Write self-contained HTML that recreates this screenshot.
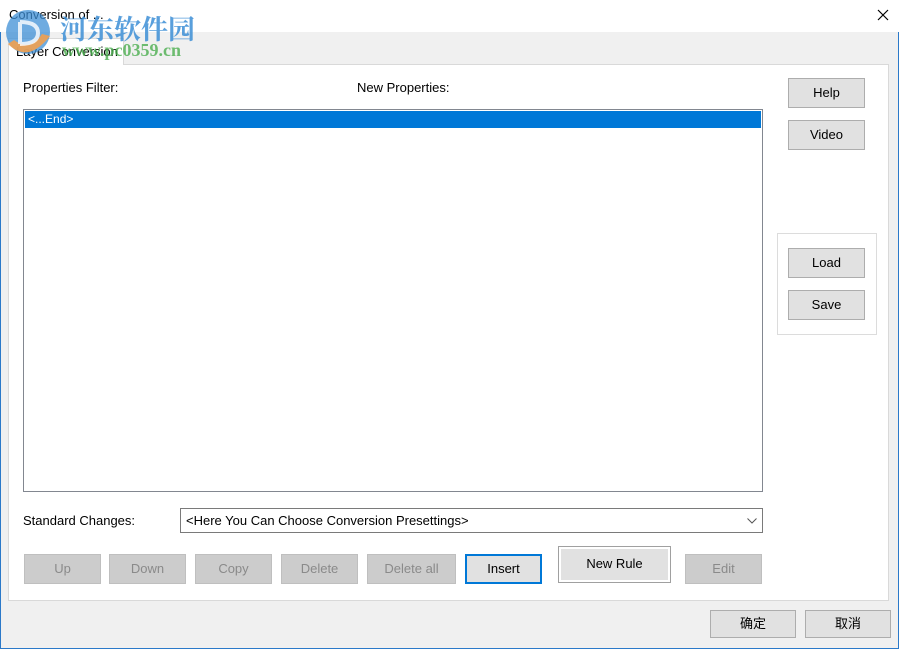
<!DOCTYPE html>
<html><head><meta charset="utf-8"><style>
*{box-sizing:border-box;margin:0;padding:0}
body{width:899px;height:649px;background:#f0f0f0;font-family:"Segoe UI","Liberation Sans","Noto Sans CJK SC",sans-serif;font-size:12px;color:#000;position:relative;overflow:hidden}
.a{position:absolute}
.frame{left:0;top:0;width:899px;height:649px;border:1px solid #2b79c9;border-top:none}
.btn{position:absolute;background:#e1e1e1;border:1px solid #adadad;text-align:center;font-size:13px;}
.dis{background:#cccccc;border-color:#bfbfbf;color:#8a8a8a}
</style></head><body>
<div class="a frame"></div>
<div class="a" style="left:0;top:0;width:899px;height:32px;background:#fff"></div>
<div class="a" style="left:9px;top:7px;font-size:13px">Conversion of ...</div>
<svg class="a" style="left:877px;top:9px" width="12" height="12"><path d="M1 1L11 11M11 1L1 11" stroke="#000" stroke-width="1.2"/></svg>
<!-- panel -->
<div class="a" style="left:8px;top:64px;width:881px;height:537px;background:#fff;border:1px solid #d9d9d9"></div>
<div class="a" style="left:8px;top:38px;width:116px;height:27px;background:#fff;border:1px solid #d9d9d9;border-bottom:none"></div>
<div class="a" style="left:16px;top:44px;font-size:13px">Layer Conversion</div>
<!-- watermark -->
<svg class="a" style="left:2px;top:8px" width="56" height="52"><circle cx="26" cy="24" r="22" fill="#3d8fd6" opacity=".75"/><path d="M6 36 Q26 56 48 28 L40 26 Q28 44 12 32Z" fill="#f0a050" opacity=".9"/><path d="M18 14 L18 36 M18 14 Q36 14 36 25 Q36 36 18 36" stroke="#fff" stroke-width="4" fill="none" opacity=".8"/></svg>
<div class="a" style="left:60px;top:8px;font-size:27px;font-weight:bold;color:#3d8fd6;opacity:.85;font-family:'Noto Serif CJK SC',serif">河东软件园</div>
<div class="a" style="left:62px;top:40px;font-size:18px;font-weight:bold;color:#4caf50;opacity:.8;font-family:'Liberation Serif',serif">www.pc0359.cn</div>
<div class="a" style="left:23px;top:80px;font-size:13px">Properties Filter:</div>
<div class="a" style="left:357px;top:80px;font-size:13px">New Properties:</div>
<div class="a" style="left:23px;top:109px;width:740px;height:383px;border:1px solid #828790;background:#fff"></div>
<div class="a" style="left:25px;top:111px;width:736px;height:17px;background:#0078d7;color:#fff;padding-left:3px;font-size:12px;line-height:17px">&lt;...End&gt;</div>
<div class="a" style="left:23px;top:513px;font-size:13px">Standard Changes:</div>
<div class="a" style="left:180px;top:508px;width:583px;height:25px;border:1px solid #7a7a7a;background:#fff;padding-left:5px;line-height:23px;font-size:13px">&lt;Here You Can Choose Conversion Presettings&gt;<svg style="position:absolute;right:5px;top:9px" width="10" height="6"><path d="M0.5 0.5L5 5L9.5 0.5" stroke="#555" fill="none"/></svg></div>
<div class="btn dis" style="left:24px;top:554px;width:77px;height:30px;line-height:28px">Up</div>
<div class="btn dis" style="left:109px;top:554px;width:77px;height:30px;line-height:28px">Down</div>
<div class="btn dis" style="left:195px;top:554px;width:77px;height:30px;line-height:28px">Copy</div>
<div class="btn dis" style="left:281px;top:554px;width:77px;height:30px;line-height:28px">Delete</div>
<div class="btn dis" style="left:367px;top:554px;width:89px;height:30px;line-height:28px">Delete all</div>
<div class="btn" style="left:465px;top:554px;width:77px;height:30px;line-height:26px;border:2px solid #0078d7">Insert</div>
<div class="btn" style="left:558px;top:546px;width:113px;height:37px;border:1px solid #a0a0a0;box-shadow:inset 0 0 0 2px #fff;line-height:34px;">New Rule</div>
<div class="btn dis" style="left:685px;top:554px;width:77px;height:30px;line-height:28px">Edit</div>
<div class="btn" style="left:788px;top:78px;width:77px;height:30px;line-height:28px">Help</div>
<div class="btn" style="left:788px;top:120px;width:77px;height:30px;line-height:28px">Video</div>
<div class="a" style="left:777px;top:233px;width:100px;height:102px;border:1px solid #dcdcdc"></div>
<div class="btn" style="left:788px;top:248px;width:77px;height:30px;line-height:28px">Load</div>
<div class="btn" style="left:788px;top:290px;width:77px;height:30px;line-height:28px">Save</div>
<div class="btn" style="left:710px;top:610px;width:86px;height:28px;line-height:26px">确定</div>
<div class="btn" style="left:805px;top:610px;width:86px;height:28px;line-height:26px">取消</div>
</body></html>
